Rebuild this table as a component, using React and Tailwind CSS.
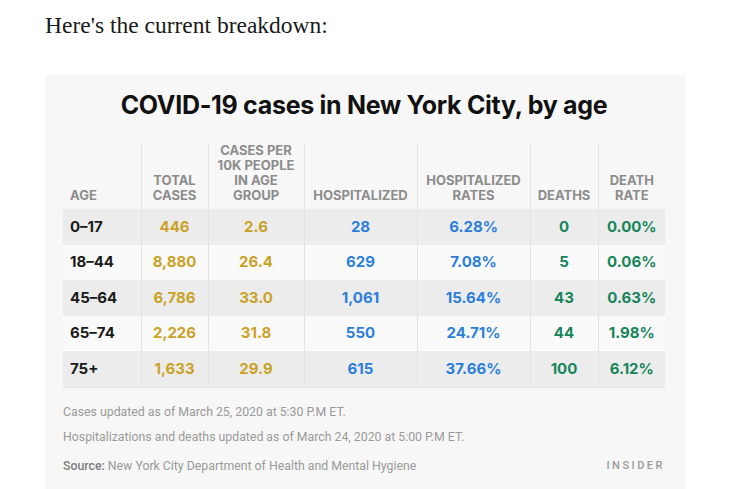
import React from "react";

const rows = [
  { age: "0–17", total: "446", per10k: "2.6", hosp: "28", hospRate: "6.28%", deaths: "0", deathRate: "0.00%" },
  { age: "18–44", total: "8,880", per10k: "26.4", hosp: "629", hospRate: "7.08%", deaths: "5", deathRate: "0.06%" },
  { age: "45–64", total: "6,786", per10k: "33.0", hosp: "1,061", hospRate: "15.64%", deaths: "43", deathRate: "0.63%" },
  { age: "65–74", total: "2,226", per10k: "31.8", hosp: "550", hospRate: "24.71%", deaths: "44", deathRate: "1.98%" },
  { age: "75+", total: "1,633", per10k: "29.9", hosp: "615", hospRate: "37.66%", deaths: "100", deathRate: "6.12%" },
];

const App = () => {
  return (
    <div className="bg-white w-[730px] h-[489px] overflow-hidden">
      <p className="pl-[45px] pt-[11px] text-[23.5px] leading-[28px] text-[#1a1a1a] font-['Liberation_Serif',serif]">
        Here's the current breakdown:
      </p>

      {/* chart card */}
      <div className="mt-[36px] ml-[45px] w-[640px] h-[420px] bg-[#f7f7f7] pl-[18px] pr-[20px] font-['Inter',sans-serif]">
        <h2 className="pt-[13px] text-center text-[25px] leading-[34px] font-bold tracking-[-0.3px] text-[#111]">
          COVID-19 cases in New York City, by age
        </h2>

        <table className="mt-[21px] w-[602px] border-collapse table-fixed">
          <colgroup>
            <col className="w-[78px]" />
            <col className="w-[67px]" />
            <col className="w-[96px]" />
            <col className="w-[113px]" />
            <col className="w-[113px]" />
            <col className="w-[68px]" />
            <col className="w-[67px]" />
          </colgroup>
          <thead>
            <tr className="h-[66px] text-[13px] leading-[15px] font-bold text-[#8c8c8c] uppercase align-bottom">
              <th className="text-left pl-[7px] pb-[6px]">Age</th>
              <th className="border-l border-[#e3e3e3] pb-[6px]">Total<br />Cases</th>
              <th className="border-l border-[#e3e3e3] pb-[6px]">Cases per<br />10K people<br />in age<br />group</th>
              <th className="border-l border-[#e3e3e3] pb-[6px]">Hospitalized</th>
              <th className="border-l border-[#e3e3e3] pb-[6px]">Hospitalized<br />Rates</th>
              <th className="border-l border-[#e3e3e3] pb-[6px]">Deaths</th>
              <th className="border-l border-[#e3e3e3] pb-[6px]">Death<br />Rate</th>
            </tr>
          </thead>
          <tbody className="text-[15px] font-bold">
            {rows.map((r, i) => (
              <tr key={i} className={"h-[35.6px] " + (i % 2 === 0 ? "bg-[#ececec]" : "bg-[#fafafa]")}>
                <td className="pl-[7px] text-[#1a1a1a]">{r.age}</td>
                <td className="border-l border-[#e3e3e3] text-center text-[#c9a227]">{r.total}</td>
                <td className="border-l border-[#e3e3e3] text-center text-[#c9a227]">{r.per10k}</td>
                <td className="border-l border-[#e3e3e3] text-center text-[#2b7fdb]">{r.hosp}</td>
                <td className="border-l border-[#e3e3e3] text-center text-[#2b7fdb]">{r.hospRate}</td>
                <td className="border-l border-[#e3e3e3] text-center text-[#16855a]">{r.deaths}</td>
                <td className="border-l border-[#e3e3e3] text-center text-[#16855a]">{r.deathRate}</td>
              </tr>
            ))}
          </tbody>
        </table>
        <div className="w-[602px] h-px bg-[#e3e3e3]" />

        {/* notes */}
        <div className="mt-[16px] text-[12.3px] text-[#9a9a9a] font-['Roboto',sans-serif]">
          <p className="leading-[16px]">Cases updated as of March 25, 2020 at 5:30 P.M ET.</p>
          <p className="mt-[9px] leading-[16px]">Hospitalizations and deaths updated as of March 24, 2020 at 5:00 P.M ET.</p>
          <div className="mt-[13px] flex items-center justify-between">
            <p className="leading-[16px]">
              <span className="font-medium text-[#7d7d7d]">Source:</span> New York City Department of Health and Mental Hygiene
            </p>
            <span className="text-[11px] tracking-[2.5px] text-[#9a9a9a] font-medium">INSIDER</span>
          </div>
        </div>
      </div>
    </div>
  );
};

export default App;
